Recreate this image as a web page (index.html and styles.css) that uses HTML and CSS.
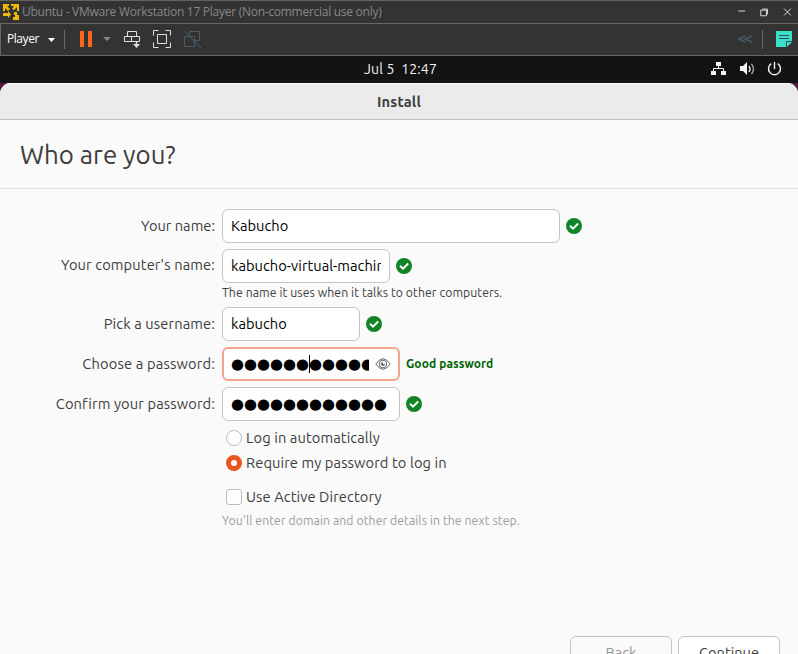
FILE: index.html
```html
<!DOCTYPE html>
<html lang="en">
<head>
<meta charset="utf-8">
<title>Install</title>
<link rel="stylesheet" href="styles.css">
</head>
<body>
<svg width="0" height="0" class="defs">
  <symbol id="ok" viewBox="0 0 16 16"><circle cx="8" cy="8" r="8" fill="#118426"/><path d="M4 7.8 7 10.6 12.2 5.5" fill="none" stroke="#fff" stroke-width="1.9"/></symbol>
</svg>
<header class="titlebar">
  <svg class="logo" width="16" height="17" viewBox="0 0 16 17"><path d="M0 0h6v2H4l3 3-2 2-3-3v3H0zM8 0h8v7h-2V3l-3 3-2-1 2-3H8zM0 9h5V7l3 3.500L5 14v-2H0zM11 8h3v3h2v5h-6v-3h2v-2h-1z" fill="#f0b90b"/></svg>
  <span class="window-title">Ubuntu - VMware Workstation 17 Player (Non-commercial use only)</span>
  <svg class="controls" width="60" height="22" viewBox="0 0 60 22" fill="none" stroke="#e4e4e4"><path d="M1 10.500h7"/><path d="M24.500 9.500h6v6h-6zM26 8.500h5.500V14"/><path d="m49 8 7 7m0-7-7 7"/></svg>
</header>
<nav class="toolbar">
  <span class="player">Player</span>
  <svg width="160" height="30" viewBox="48 24 160 30" fill="none">
    <path d="M48 38h7l-3.500 4z" fill="#fff"/><path d="M64.500 30v19" stroke="#686868"/>
    <path d="M80 31h4v16h-4zM88 31h4v16h-4z" fill="#ff671d"/><path d="M103 37h8l-4 4z" fill="#858585"/>
    <g stroke="#e0e0e0"><path d="M127.500 31.500h9v5h-9zM124.500 36.500h7v5h-7zM131.500 36.500h8v5h-8z"/><path d="M136.500 41v5" stroke-width="1.500"/><path d="M133 44h7l-3.500 4z" fill="#e0e0e0" stroke="none"/><path d="M153.500 35.500v-5h5m7 0h5v5m0 7v5h-5m-7 0h-5v-5M157.500 34.500h9v9h-9z"/></g>
    <g stroke="#4a5b65"><path d="M189.500 36v-4.500h10v9H195M184.500 36.500h10v10h-10zM184 31l17 17"/></g>
  </svg>
  <svg class="tools-right" width="64" height="30" viewBox="734 24 64 30" fill="none"><path d="m745.500 36-7 3 7 3m6.500-6-7 3 7 3" stroke="#465a66" stroke-width="1.400"/><path d="M762.500 30v19" stroke="#686868"/><path d="M776 31h16v11l-5 5h-11z" fill="#3adfc9"/><path d="M779 35.500h10M779 38.500h10" stroke="#28515b"/><path d="M786.500 47v-5.500h5.500" stroke="#28515b"/></svg>
</nav>
<div class="topbar">
  <span class="clock">Jul 5&nbsp; 12:47</span>
  <svg class="status" width="76" height="26" viewBox="710 56 76 26" fill="#f4f4f4"><path d="M716 62h5v4h-5zM711 71h5v4h-5zM721 71h5v4h-5z"/><path d="M718.500 66v3m-5 2v-2.500h10V71" fill="none" stroke="#f4f4f4"/><path d="M740 66h3l4-4v13l-4-4h-3z"/><g fill="none" stroke="#f4f4f4"><path d="M749 66q2 3 0 6" stroke-width="1.300"/><path d="M751.500 64q4 5 0 10" stroke="#aaa" stroke-width="1.300"/><path d="M771.300 63.600a6 6 0 1 0 6.400 0M774.500 62v7" stroke-width="1.400"/></g></svg>
</div>
<div class="desktop">
<main class="installer">
  <div class="headerbar"><span class="install">Install</span></div>
  <h1><span class="heading">Who are you?</span></h1>
  <form class="form">
    <div class="row"><label class="l-name">Your name:</label><div class="field wide"><span class="v-name">Kabucho</span></div><svg class="ok"><use href="#ok"/></svg></div>
    <div class="row"><label class="l-computer">Your computer's name:</label><div class="field host"><span class="v-host">kabucho-virtual-machine</span></div><svg class="ok"><use href="#ok"/></svg></div>
    <p class="hint"><span class="t-hint">The name it uses when it talks to other computers.</span></p>
    <div class="row"><label class="l-user">Pick a username:</label><div class="field user"><span class="v-user">kabucho</span></div><svg class="ok"><use href="#ok"/></svg></div>
    <div class="row"><label class="l-pass">Choose a password:</label><div class="field pass focus"><span class="dots">●●●●●●●●●●●●</span><i class="caret"></i><svg class="eye" width="16" height="14" viewBox="0 0 16 14" fill="none" stroke="#666"><path d="M.8 7Q8-3.500 15.200 7 8 17.500.8 7z"/><circle cx="8" cy="7" r="3.800"/><path d="M8 5a2 2 0 1 0 2 2H8z" fill="#666" stroke="none"/></svg></div><span class="good">Good password</span></div>
    <div class="row"><label class="l-confirm">Confirm your password:</label><div class="field pass"><span class="dots">●●●●●●●●●●●●</span></div><svg class="ok"><use href="#ok"/></svg></div>
    <div class="option first"><i class="radio"></i><span class="t-auto">Log in automatically</span></div>
    <div class="option"><i class="radio on"></i><span class="t-require">Require my password to log in</span></div>
    <div class="option directory"><i class="check"></i><span class="t-directory">Use Active Directory</span></div>
    <p class="hint muted"><span class="t-muted">You'll enter domain and other details in the next step.</span></p>
  </form>
  <footer><div class="button disabled"><span class="t-back">Back</span></div><div class="button"><span class="t-continue">Continue</span></div></footer>
</main>
</div>
</body>
</html>
```
FILE: styles.css
```css
* { box-sizing: border-box; }
body { margin: 0; width: 798px; height: 654px; overflow: hidden; display: flex; flex-direction: column; background: #131313; color: #3d3d3d; font: 14.670px/20px Ubuntu, "Noto Sans", sans-serif; }
.defs { position: absolute; }
svg { display: block; flex: none; }
span, label { white-space: nowrap; }
.titlebar { height: 23px; flex: none; display: flex; align-items: center; background: #333; border-top: 1px solid #626262; color: #888; padding-left: 3px; gap: 3px; }
.window-title { font: 12px/20px "Open Sans", sans-serif; letter-spacing: -.27px; }
.controls { margin-left: auto; margin-right: 2px; padding-bottom: 1px; }
.toolbar { height: 33px; flex: none; display: flex; align-items: center; background: #333; border: 1px solid #686868; border-right: 0; padding: 0 0 2px 6px; color: #fff; }
.player { width: 41px; font: 12px/20px "Open Sans", sans-serif; letter-spacing: -.45px; }
.tools-right { margin-left: auto; }
.topbar { height: 27px; flex: none; display: grid; grid-template-columns: 1fr auto 1fr; align-items: center; color: #f4f4f4; padding-bottom: 1px; }
.clock { grid-column: 2; margin-left: 3px; font-size: 14px; letter-spacing: .15px; }
.status { justify-self: end; margin-right: 12px; }
.desktop { flex: 1; background: #521b3d; min-height: 0; }
.installer { height: 100%; background: #fafafa; border-radius: 11px 11px 0 0; overflow: hidden; display: flex; flex-direction: column; }
.headerbar { height: 37px; flex: none; display: flex; align-items: center; justify-content: center; background: #ebebeb; border-top: 1px solid #fff; border-bottom: 1px solid #bebebe; font-weight: 700; letter-spacing: .2px; }
h1 { margin: 0; height: 69px; flex: none; border-bottom: 1px solid #dcdcdc; padding: 18px 20px; font-size: 25.900px; line-height: 34px; font-weight: 400; }
.form { padding-top: 20px; flex: 1; min-height: 0; }
.row { display: flex; align-items: center; height: 34px; margin-bottom: 6px; }
.row label { width: 215px; margin-right: 7px; text-align: right; letter-spacing: .12px; }
.row .l-name { letter-spacing: 0; }
.row .l-computer { padding-bottom: 2px; }
.row .l-pass { letter-spacing: .17px; }
.field { height: 34px; border: 1px solid #c4c4c4; border-radius: 6px; background: #fff; color: #000; padding: 0 8px; display: flex; align-items: center; overflow: hidden; position: relative; letter-spacing: .03px; }
.field span { overflow: hidden; }
.wide { width: 338px; }
.host { width: 168px; }
.user { width: 138px; }
.pass { width: 178px; }
.focus { border: 2px solid #f4a48c; padding: 0 7px; }
.dots { font: 14.900px/22px "DejaVu Sans", sans-serif; letter-spacing: 0; }
.focus .dots { width: 138px; flex: none; }
.caret { position: absolute; left: 85px; top: 6px; width: 1px; height: 18px; background: #000; }
.eye { margin-left: 6px; }
.ok { width: 16px; height: 16px; margin-left: 6px; }
.good { margin-left: 6px; color: #006400; font-size: 12px; font-weight: 700; letter-spacing: .07px; }
.hint { margin: -6px 0 4px 222px; height: 20px; line-height: 20px; font-size: 12.220px; letter-spacing: .08px; }
.muted { color: #9c9c9c; margin-top: -1px; }
.option { display: flex; align-items: center; gap: 4px; height: 20px; margin: 0 0 5px 226px; letter-spacing: .1px; }
.first { margin-top: 7px; }
.directory { margin-top: 14px; }
.radio, .check { width: 16px; height: 16px; border: 1px solid #bcbcbc; background: #fff; border-radius: 50%; }
.check { border-radius: 3px; }
.radio.on { border: 5.500px solid #e95420; }
footer { height: 18px; flex: none; display: flex; justify-content: flex-end; align-items: flex-start; gap: 6px; padding-right: 18px; }
.button { width: 102px; height: 34px; border: 1px solid #c4c4c4; border-radius: 6px; background: #fff; display: flex; align-items: center; justify-content: center; }
.disabled { background: #fafafa; color: #969696; }
```
